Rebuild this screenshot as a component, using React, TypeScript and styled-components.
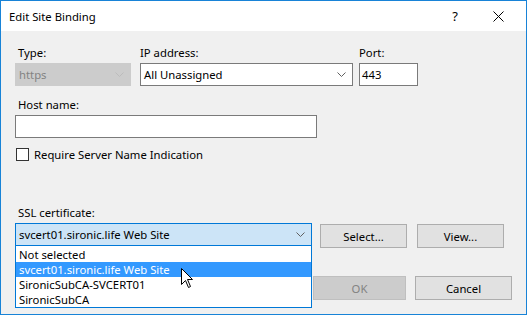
import styled, { createGlobalStyle } from 'styled-components';

const GlobalStyle = createGlobalStyle`
  html, body {
    margin: 0;
    padding: 0;
    background: #ffffff;
  }
  * {
    box-sizing: border-box;
  }
`;

const Chevron = ({ color = '#606060' }: { color?: string }) => (
  <svg width="9" height="5" viewBox="0 0 9 5">
    <polyline points="0.5,0.5 4.5,4.5 8.5,0.5" fill="none" stroke={color} strokeWidth="1" />
  </svg>
);

const CloseGlyph = () => (
  <svg width="11" height="11" viewBox="0 0 11 11">
    <path d="M0.5 0.5 L10.5 10.5 M10.5 0.5 L0.5 10.5" stroke="#000" strokeWidth="1" />
  </svg>
);

const PointerGlyph = () => (
  <svg width="13" height="21" viewBox="0 0 13 21">
    <path
      d="M0.5 0.5 L0.5 16.5 L4.5 12.5 L7.5 19.5 L9.5 18.5 L6.5 11.5 L11.5 11.5 Z"
      fill="#ffffff"
      stroke="#000000"
      strokeWidth="1"
      strokeLinejoin="miter"
    />
  </svg>
);

const certificates = [
  'Not selected',
  'svcert01.sironic.life Web Site',
  'SironicSubCA-SVCERT01',
  'SironicSubCA',
];

export default function App() {
  return (
    <>
      <GlobalStyle />
      <Window>
        <TitleBar>
          <TitleText>Edit Site Binding</TitleText>
          <CaptionButton gap={9}>?</CaptionButton>
          <CaptionButton gap={11}>
            <CloseGlyph />
          </CaptionButton>
        </TitleBar>
        <Body>
          <Row>
            <Field width={116}>
              <Label indent={3}>Type:</Label>
              <Combo disabled>
                <span>https</span>
                <Chevron color="#bcbcbc" />
              </Combo>
            </Field>
            <Field width={213} gap={9}>
              <Label indent={-1}>IP address:</Label>
              <Combo>
                <span>All Unassigned</span>
                <Chevron />
              </Combo>
            </Field>
            <Field width={59} gap={6}>
              <Label>Port:</Label>
              <TextBox>443</TextBox>
            </Field>
          </Row>

          <Section top={11}>
            <Field width={302}>
              <Label indent={3}>Host name:</Label>
              <TextBox />
            </Field>
          </Section>

          <CheckRow>
            <CheckBox />
            <span>Require Server Name Indication</span>
          </CheckRow>

          <Section top={43}>
            <Label indent={3}>SSL certificate:</Label>
            <CertRow>
              <ComboWrap>
                <Combo focused>
                  <span>svcert01.sironic.life Web Site</span>
                  <Chevron />
                </Combo>
                <DropList>
                  {certificates.map((c, i) => (
                    <DropItem key={c} active={i === 1}>
                      {c}
                    </DropItem>
                  ))}
                </DropList>
              </ComboWrap>
              <Button width={87} gap={8} offset={1}>
                Select...
              </Button>
              <Button width={87} gap={10} offset={1}>
                View...
              </Button>
            </CertRow>
          </Section>

          <Footer>
            <Button width={93} disabled>
              OK
            </Button>
            <Button width={97} gap={9}>
              Cancel
            </Button>
          </Footer>
        </Body>
        <Pointer>
          <PointerGlyph />
        </Pointer>
      </Window>
    </>
  );
}

const Window = styled.div`
  position: relative;
  width: 527px;
  height: 315px;
  border: 1px solid #1883d7;
  display: flex;
  flex-direction: column;
  font-family: 'Noto Sans', 'Open Sans', sans-serif;
  font-size: 11.3px;
  color: #000000;
`;

const TitleBar = styled.div`
  height: 30px;
  background: #ffffff;
  display: flex;
  align-items: center;
  padding-left: 8px;
`;

const TitleText = styled.div`
  flex: 1;
`;

const CaptionButton = styled.div<{ gap: number }>`
  width: 34px;
  height: 30px;
  display: flex;
  align-items: center;
  justify-content: center;
  margin-right: ${(p) => p.gap}px;
  font-size: 13px;
`;

const Body = styled.div`
  flex: 1;
  background: #f0f0f0;
  padding: 14px 14px 14px 14px;
  display: flex;
  flex-direction: column;
`;

const Row = styled.div`
  display: flex;
  align-items: flex-start;
`;

const Section = styled.div<{ top: number }>`
  margin-top: ${(p) => p.top}px;
  display: flex;
  flex-direction: column;
`;

const Field = styled.div<{ width: number; gap?: number }>`
  width: ${(p) => p.width}px;
  margin-left: ${(p) => p.gap ?? 0}px;
  display: flex;
  flex-direction: column;
`;

const Label = styled.div<{ indent?: number }>`
  height: 16px;
  line-height: 16px;
  margin-bottom: 2px;
  padding-left: ${(p) => p.indent ?? 0}px;
  white-space: nowrap;
`;

const Combo = styled.div<{ disabled?: boolean; focused?: boolean }>`
  height: 23px;
  display: flex;
  align-items: center;
  justify-content: space-between;
  padding: 0 6px 0 3px;
  border: 1px solid
    ${(p) => (p.disabled ? '#cccccc' : p.focused ? '#0078d7' : '#7a7a7a')};
  background: ${(p) => (p.disabled ? '#cccccc' : p.focused ? '#cce4f7' : '#ffffff')};
  color: ${(p) => (p.disabled ? '#838383' : '#000000')};
  white-space: nowrap;
`;

const TextBox = styled.div`
  height: 23px;
  display: flex;
  align-items: center;
  padding-left: 2px;
  border: 1px solid #7a7a7a;
  background: #ffffff;
`;

const CheckRow = styled.div`
  margin-top: 9px;
  display: flex;
  align-items: center;
  padding-left: 1px;
  gap: 5px;
`;

const CheckBox = styled.div`
  width: 13px;
  height: 13px;
  border: 1px solid #333333;
  background: #ffffff;
`;

const CertRow = styled.div`
  display: flex;
  align-items: flex-start;
`;

const ComboWrap = styled.div`
  position: relative;
  width: 297px;
`;

const DropList = styled.div`
  position: absolute;
  top: 100%;
  left: 0;
  right: 0;
  z-index: 2;
  background: #ffffff;
  border: 1px solid #0078d7;
  border-top: none;
  padding-top: 1px;
`;

const DropItem = styled.div<{ active?: boolean }>`
  height: 15px;
  line-height: 15px;
  padding-left: 3px;
  white-space: nowrap;
  background: ${(p) => (p.active ? '#3399ff' : 'transparent')};
  color: ${(p) => (p.active ? '#ffffff' : '#000000')};
`;

const Button = styled.div<{ width: number; gap?: number; offset?: number; disabled?: boolean }>`
  width: ${(p) => p.width}px;
  height: 24px;
  margin-left: ${(p) => p.gap ?? 0}px;
  margin-top: ${(p) => p.offset ?? 0}px;
  display: flex;
  align-items: center;
  justify-content: center;
  border: 1px solid ${(p) => (p.disabled ? '#bfbfbf' : '#adadad')};
  background: ${(p) => (p.disabled ? '#cccccc' : '#e1e1e1')};
  color: ${(p) => (p.disabled ? '#838383' : '#000000')};
`;

const Footer = styled.div`
  margin-top: auto;
  display: flex;
  justify-content: flex-end;
`;

const Pointer = styled.div`
  position: absolute;
  left: 180px;
  top: 267px;
  z-index: 3;
  line-height: 0;
`;
